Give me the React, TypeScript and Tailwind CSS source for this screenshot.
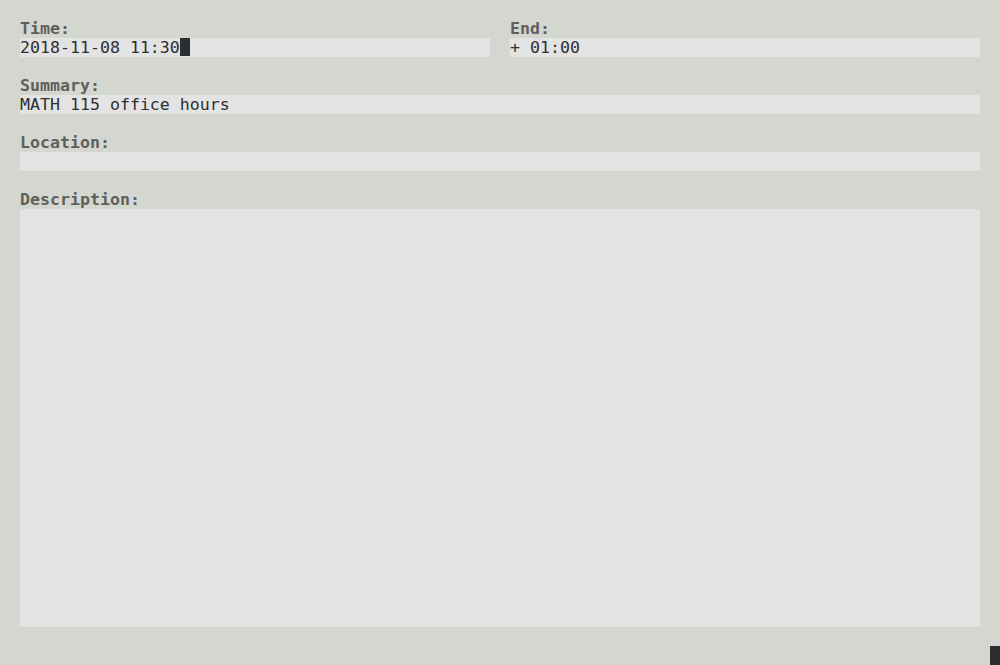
import React from "react";

const mono = { fontFamily: '"DejaVu Sans Mono", monospace' };

function Label({ children }: { children: React.ReactNode }) {
  return <div className="h-[19px] font-bold text-[#5f605d]">{children}</div>;
}

function Field({ children, className = "" }: { children?: React.ReactNode; className?: string }) {
  return (
    <div className={"h-[19px] bg-[#e3e3e3] text-[#2e3032] flex items-start whitespace-pre " + className}>
      {children}
    </div>
  );
}

export default function App() {
  return (
    <div
      className="w-[1000px] h-[665px] bg-[#d4d7cf] text-[16.6px] leading-[19px] overflow-hidden flex flex-col"
      style={mono}
    >
      <div className="px-[20px] pt-[19px] flex flex-col">
        <div className="flex gap-[20px]">
          <div className="w-[470px] flex flex-col">
            <Label>Time:</Label>
            <Field>
              <span>2018-11-08 11:30</span>
              <span className="inline-block w-[10px] h-[18px] bg-[#2b2f31]" />
            </Field>
          </div>
          <div className="w-[470px] flex flex-col">
            <Label>End:</Label>
            <Field>+ 01:00</Field>
          </div>
        </div>
        <div className="h-[19px]" />
        <Label>Summary:</Label>
        <Field>MATH 115 office hours</Field>
        <div className="h-[19px]" />
        <Label>Location:</Label>
        <Field />
        <div className="h-[19px]" />
        <Label>Description:</Label>
        <div className="h-[418px] bg-[#e3e3e3]" />
        <div className="h-[19px]" />
      </div>
      <div className="flex justify-end">
        <div className="w-[10px] h-[19px] bg-[#2b2f31]" />
      </div>
    </div>
  );
}
